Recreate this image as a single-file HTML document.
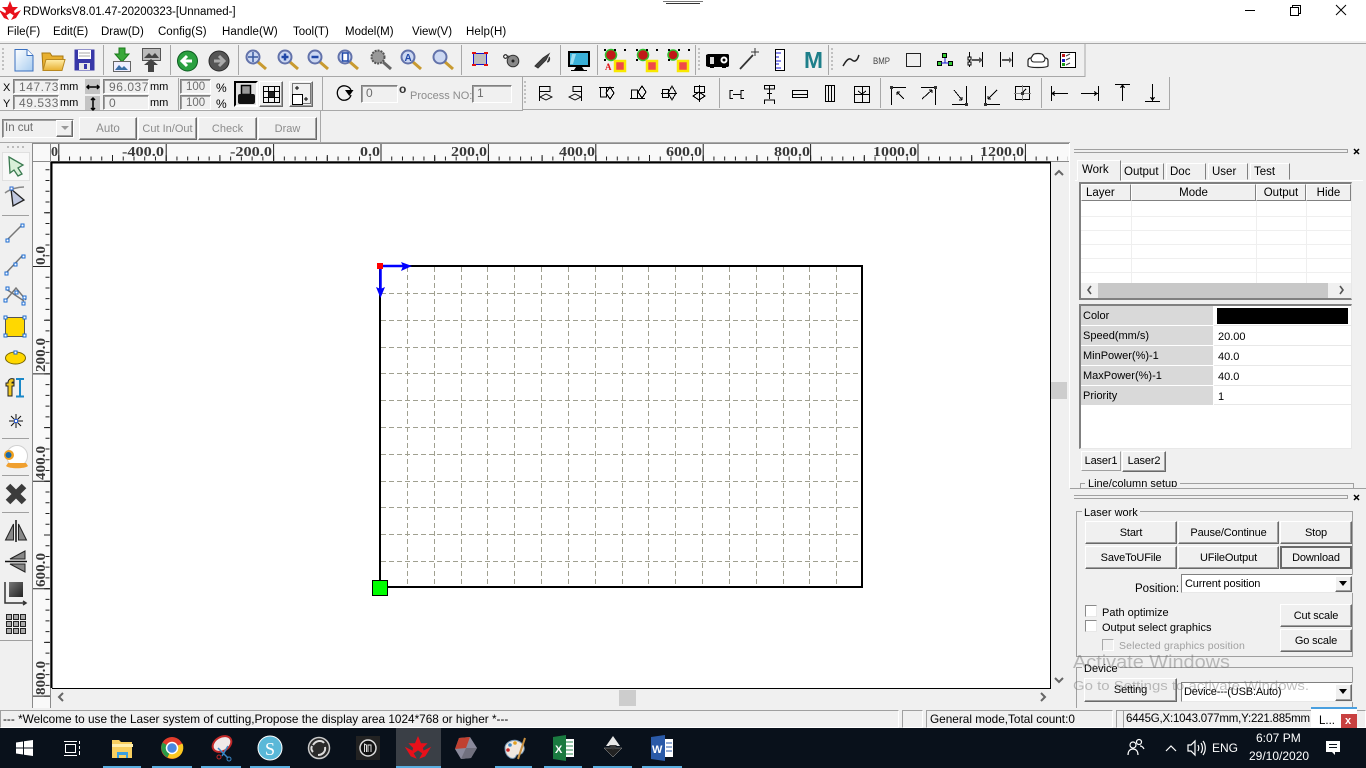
<!DOCTYPE html>
<html><head><meta charset="utf-8"><title>RDWorks</title>
<style>
html,body{margin:0;padding:0;width:1366px;height:768px;overflow:hidden;background:#f0f0f0}
body{position:relative;font:11.5px "Liberation Sans",sans-serif;color:#000}
div{position:absolute;box-sizing:border-box;white-space:nowrap}
.t{line-height:14px}
.b{background:#f0f0f0;border:1px solid;border-color:#fff #696969 #696969 #fff;box-shadow:inset -1px -1px 0 #a0a0a0;text-align:center;font-size:11px;letter-spacing:-.15px}
.d{color:#8c8c8c}
.i{border:1px solid;border-color:#808080 #fff #fff #808080;box-shadow:inset 1px 1px 0 #a0a0a0;color:#6d6d6d;padding-left:5px;background:#f0f0f0;line-height:14px;font-size:12px}
.s{background:#f0f0f0;border:1px solid;border-color:#a0a0a0 #fff #fff #a0a0a0;line-height:16px;padding-left:2px;font-size:11.8px;overflow:hidden}
.h{background:#f0f0f0;border:1px solid;border-color:#fff #808080 #808080 #fff;text-align:center;line-height:16px}
.tab{background:#f0f0f0;border:1px solid;border-color:#fff #808080 transparent #fff;line-height:17px;padding-left:3px;font-size:11.5px}
.c{background:#fff;border:1px solid;border-color:#8a8a8a #e8e8e8 #e8e8e8 #8a8a8a}
.cb{font-size:11px;letter-spacing:-.15px}
.l{left:1081px;width:132px;height:19px;background:#d9d9d9;padding-left:2px;line-height:20px;font-size:11px}
</style></head>
<body>
<!-- title + menu -->
<div style="left:0;top:0;width:1366px;height:41px;background:#fff"></div>
<div class="t" style="left:23px;top:5px;font-size:11.5px;letter-spacing:-.04px">RDWorksV8.01.47-20200323-[Unnamed-]</div>
<div class="t" style="left:7px;top:25px">File(F)</div>
<div class="t" style="left:53px;top:25px">Edit(E)</div>
<div class="t" style="left:101px;top:25px">Draw(D)</div>
<div class="t" style="left:158px;top:25px">Config(S)</div>
<div class="t" style="left:222px;top:25px;letter-spacing:.1px">Handle(W)</div>
<div class="t" style="left:293px;top:25px">Tool(T)</div>
<div class="t" style="left:345px;top:25px">Model(M)</div>
<div class="t" style="left:412px;top:25px">View(V)</div>
<div class="t" style="left:466px;top:25px;letter-spacing:.1px">Help(H)</div>
<!-- row 2 widgets -->
<div class="t" style="left:3px;top:81px;font-size:11px">X</div>
<div class="t" style="left:3px;top:97px;font-size:11px">Y</div>
<div class="i" style="left:13px;top:79px;width:46px;height:15px;overflow:hidden;letter-spacing:.55px;line-height:15px">147.736</div>
<div class="i" style="left:13px;top:95px;width:46px;height:15px;letter-spacing:.55px;line-height:15px">49.533</div>
<div class="t" style="left:60px;top:80px;font-size:11px">mm</div>
<div class="t" style="left:60px;top:96px;font-size:11px">mm</div>
<div style="left:85px;top:79px;width:15px;height:15px;background:#c4c4c4"></div>
<div style="left:85px;top:96px;width:15px;height:15px;background:#c4c4c4"></div>
<div class="i" style="left:103px;top:79px;width:46px;height:15px;letter-spacing:.55px;line-height:15px">96.037</div>
<div class="i" style="left:103px;top:95px;width:46px;height:15px;line-height:15px">0</div>
<div class="t" style="left:150px;top:80px;font-size:11px">mm</div>
<div class="t" style="left:150px;top:96px;font-size:11px">mm</div>
<div class="i" style="left:180px;top:79px;width:31px;height:15px;line-height:15px;padding-left:5px;font-size:11.5px">100</div>
<div class="i" style="left:180px;top:95px;width:31px;height:15px;line-height:15px;padding-left:5px;font-size:11.5px">100</div>
<div class="t" style="left:216px;top:81px;font-size:12px">%</div>
<div class="t" style="left:216px;top:97px;font-size:12px">%</div>
<div style="left:234px;top:81px;width:24px;height:26px;border:2px solid;border-color:#000 #fff #fff #000;background:#e0e0e0"></div>
<div class="b" style="left:259px;top:81px;width:24px;height:26px"></div>
<div class="b" style="left:289px;top:81px;width:24px;height:26px"></div>
<div class="i" style="left:361px;top:85px;width:37px;height:18px;padding-left:4px;line-height:15px">0</div>
<div class="t" style="left:399px;top:82px;font-size:12px;font-weight:bold;color:#333">o</div>
<div class="t d" style="left:410px;top:89px;font-size:11px">Process NO:</div>
<div class="i" style="left:472px;top:85px;width:40px;height:18px;padding-left:4px;line-height:15px">1</div>
<!-- row 3 -->
<div class="i" style="left:2px;top:119px;width:72px;height:19px;padding-left:2px;line-height:17px;font-size:11.5px;color:#6d6d6d">In cut</div>
<div class="b" style="left:56px;top:120px;width:17px;height:17px"></div>
<div class="b d" style="left:79px;top:117px;width:58px;height:23px;line-height:22px;font-size:11.5px;letter-spacing:0">Auto</div>
<div class="b d" style="left:138px;top:117px;width:59px;height:23px;line-height:22px;font-size:11px;letter-spacing:0">Cut In/Out</div>
<div class="b d" style="left:198px;top:117px;width:59px;height:23px;line-height:22px;font-size:11px;letter-spacing:0">Check</div>
<div class="b d" style="left:258px;top:117px;width:59px;height:23px;line-height:22px;font-size:11px;letter-spacing:0">Draw</div>
<!-- rulers -->
<div style="left:33px;top:144px;width:1036px;height:18px;background:#f9f9f9"></div>
<div style="left:33px;top:162px;width:18px;height:546px;background:#f9f9f9"></div>
<!-- canvas -->
<div style="left:52px;top:163px;width:998px;height:525px;background:#fff"></div>
<div style="left:1051px;top:382px;width:16px;height:17px;background:#cdcdcd"></div>
<div style="left:619px;top:690px;width:17px;height:16px;background:#cdcdcd"></div>
<!-- right panel top -->
<div style="left:1077px;top:160px;width:44px;height:21px;background:#f0f0f0;border:1px solid;border-color:#fff #808080 transparent #fff;z-index:2;padding-left:4px;line-height:19px;font-size:11.5px">Work</div>
<div class="tab" style="left:1121px;top:163px;width:43px;height:17px;line-height:16px;padding-left:2px">Output</div>
<div class="tab" style="left:1166px;top:163px;width:40px;height:17px;line-height:16px">Doc</div>
<div class="tab" style="left:1208px;top:163px;width:40px;height:17px;line-height:16px">User</div>
<div class="tab" style="left:1250px;top:163px;width:40px;height:17px;line-height:16px">Test</div>
<div style="left:1075px;top:180px;width:288px;height:1px;background:#fff"></div>
<div class="c" style="left:1079px;top:182px;width:273px;height:118px;border-width:2px 1px 2px 2px;border-color:#808080 #e8e8e8 #808080 #808080"></div>
<div class="h" style="left:1081px;top:184px;width:50px;height:17px;text-align:left;padding-left:4px">Layer</div>
<div class="h" style="left:1131px;top:184px;width:125px;height:17px">Mode</div>
<div class="h" style="left:1256px;top:184px;width:50px;height:17px">Output</div>
<div class="h" style="left:1306px;top:184px;width:45px;height:17px">Hide</div>
<div style="left:1081px;top:283px;width:270px;height:15px;background:#f0f0f0"></div>
<div style="left:1098px;top:283px;width:230px;height:15px;background:#c8c8c8"></div>
<div class="c" style="left:1079px;top:304px;width:273px;height:145px;border-width:2px 1px 1px 2px;border-color:#808080 #e8e8e8 #e8e8e8 #808080"></div>
<div class="l" style="top:306px">Color</div>
<div class="l" style="top:326px">Speed(mm/s)</div>
<div class="l" style="top:346px">MinPower(%)-1</div>
<div class="l" style="top:366px">MaxPower(%)-1</div>
<div class="l" style="top:386px">Priority</div>
<div style="left:1217px;top:308px;width:131px;height:16px;background:#000"></div>
<div class="t" style="left:1218px;top:330px;font-size:11px">20.00</div>
<div class="t" style="left:1218px;top:350px;font-size:11px">40.0</div>
<div class="t" style="left:1218px;top:370px;font-size:11px">40.0</div>
<div class="t" style="left:1218px;top:390px;font-size:11px">1</div>
<div class="b" style="left:1081px;top:451px;width:40px;height:20px;line-height:19px;box-shadow:none;border-right-color:#a0a0a0;border-bottom-color:#a0a0a0">Laser1</div>
<div class="b" style="left:1122px;top:451px;width:44px;height:21px;line-height:19px">Laser2</div>
<div style="left:1080px;top:483px;width:274px;height:6px;border:1px solid #a0a0a0;border-bottom:0"></div>
<div style="left:1085px;top:477px;height:10px;overflow:hidden;background:#f0f0f0;padding:0 3px;font-size:11px;line-height:14px">Line/column setup</div>
<div style="left:1070px;top:488px;width:296px;height:222px;background:#f0f0f0;border-top:1px solid #a0a0a0"></div>
<!-- lower panel -->
<div style="left:1076px;top:511px;width:277px;height:146px;border:1px solid #a0a0a0"></div>
<div class="t" style="left:1082px;top:506px;background:#f0f0f0;padding:0 2px;font-size:11px">Laser work</div>
<div class="b" style="left:1085px;top:521px;width:92px;height:23px;line-height:22px">Start</div>
<div class="b" style="left:1178px;top:521px;width:101px;height:23px;line-height:22px">Pause/Continue</div>
<div class="b" style="left:1280px;top:521px;width:72px;height:23px;line-height:22px">Stop</div>
<div class="b" style="left:1085px;top:546px;width:92px;height:23px;line-height:22px">SaveToUFile</div>
<div class="b" style="left:1178px;top:546px;width:101px;height:23px;line-height:22px">UFileOutput</div>
<div class="b" style="left:1280px;top:546px;width:72px;height:23px;line-height:20px;border:2px solid;border-color:#696969;box-shadow:none">Download</div>
<div class="t" style="left:1135px;top:582px;font-size:11.5px">Position:</div>
<div class="c cb" style="left:1181px;top:574px;width:172px;height:19px;border-color:#808080 #e8e8e8 #e8e8e8 #808080;padding-left:3px;line-height:19px">Current position</div>
<div class="b" style="left:1335px;top:576px;width:17px;height:16px"></div>
<div class="c" style="left:1085px;top:605px;width:12px;height:12px"></div>
<div class="t" style="left:1102px;top:606px;font-size:11px">Path optimize</div>
<div class="c" style="left:1085px;top:620px;width:12px;height:12px"></div>
<div class="t" style="left:1102px;top:621px;font-size:11px">Output select graphics</div>
<div class="c" style="left:1102px;top:639px;width:12px;height:12px;background:#f0f0f0;border-color:#a8a8a8 #fff #fff #a8a8a8"></div>
<div class="t d" style="left:1119px;top:639px;font-size:10.5px;letter-spacing:.13px;color:#a0a0a0">Selected graphics position</div>
<div class="b" style="left:1280px;top:604px;width:72px;height:23px;line-height:22px">Cut scale</div>
<div class="b" style="left:1280px;top:629px;width:72px;height:23px;line-height:22px">Go scale</div>
<div style="left:1076px;top:667px;width:277px;height:43px;border:1px solid #a0a0a0;border-bottom:0"></div>
<div class="t" style="left:1082px;top:662px;background:#f0f0f0;padding:0 2px;font-size:11px">Device</div>
<div class="b" style="left:1084px;top:678px;width:93px;height:24px;line-height:23px">Setting</div>
<div class="c cb" style="left:1181px;top:682px;width:172px;height:20px;border-color:#808080 #e8e8e8 #e8e8e8 #808080;padding-left:2px;line-height:19px">Device---(USB:Auto)</div>
<div class="b" style="left:1335px;top:684px;width:17px;height:17px"></div>
<!-- status bar -->
<div style="left:0;top:708px;width:1366px;height:20px;background:#f0f0f0"></div>
<div class="s" style="left:0;top:710px;width:899px;height:18px">--- *Welcome to use the Laser system of cutting,Propose the display area 1024*768 or higher *---</div>
<div class="s" style="left:902px;top:710px;width:21px;height:18px"></div>
<div class="s" style="left:926px;top:710px;width:187px;height:18px;padding-left:3px">General mode,Total count:0</div>
<div class="s" style="left:1116px;top:710px;width:8px;height:18px"></div>
<div class="s" style="left:1123px;top:710px;width:243px;height:18px;letter-spacing:-.2px;font-size:11.5px">6445G,X:1043.077mm,Y:221.885mm</div>
<div style="left:1311px;top:707px;width:46px;height:21px;background:#fff;border-top:2px solid #4aa0e0"></div>
<div class="t" style="left:1319px;top:714px;font-size:11.5px">L...</div>
<div style="left:1341px;top:714px;width:16px;height:14px;background:#c84040"></div>
<div class="t" style="left:1345px;top:714px;font-size:11px;color:#fff;font-weight:bold">x</div>
<!-- taskbar -->
<div style="left:0;top:728px;width:1366px;height:40px;background:#09111b"></div>
<div style="left:396px;top:728px;width:45px;height:40px;background:#3a3f46"></div>
<div class="t" style="left:1212px;top:741px;font-size:12px;color:#fff">ENG</div>
<div class="t" style="left:1256px;top:731px;font-size:12px;color:#fff">6:07 PM</div>
<div class="t" style="left:1249px;top:749px;font-size:12px;color:#fff">29/10/2020</div>

<svg width="1366" height="768" style="position:absolute;left:0;top:0" xmlns="http://www.w3.org/2000/svg" font-family="Liberation Sans, sans-serif">
<defs>
<linearGradient id="pg" x1="0" y1="0" x2="1" y2="1"><stop offset="0" stop-color="#fff"/><stop offset="1" stop-color="#a8ccf0"/></linearGradient>
<linearGradient id="fo" x1="0" y1="0" x2="0" y2="1"><stop offset="0" stop-color="#ffeeaa"/><stop offset="1" stop-color="#e8b030"/></linearGradient>
<linearGradient id="ds" x1="0" y1="0" x2="1" y2="1"><stop offset="0" stop-color="#777"/><stop offset="1" stop-color="#222"/></linearGradient>
<g id="mag"><line x1="2" y1="2" x2="10" y2="9" stroke="#c89a30" stroke-width="3"/><circle cx="-3" cy="-3" r="6.500" fill="#ccd8f2" stroke="#6272aa" stroke-width="2"/></g>
<g id="logo"><polygon points="0,-10 2.500,-4 8,-4 4,0 6,6 0,2 -6,6 -4,0 -8,-4 -2.500,-4" fill="#e8101a"/><polygon points="-11,-1 -5,2 -1,9 -6,7" fill="#e8101a"/><polygon points="11,-1 5,2 1,9 6,7" fill="#e8101a"/></g>
<g id="dots" fill="#000"><rect x="-11" y="-11" width="2" height="2"/><rect x="-1" y="-11" width="2" height="2"/><rect x="9" y="-11" width="2" height="2"/><rect x="-11" y="-1" width="2" height="2"/></g>
</defs>

<!-- title -->
<use href="#logo" transform="translate(10,11)"/>
<path d="M663 1.500h40" stroke="#777" stroke-width="1"/><path d="M666 3.500h34" stroke="#333" stroke-width="1"/>
<path d="M1245 10.500h10" stroke="#000" fill="none"/>
<path d="M1290.500 7.500h8v8h-8zM1292.500 7.500v-2h8v8h-2" stroke="#000" fill="none"/>
<path d="M1336 5l10 10M1346 5l-10 10" stroke="#000" fill="none"/>

<!-- toolbar separators -->
<g stroke="#a8a8a8" fill="none">
<path d="M0 43.500H1366"/><path d="M0 76.500H1085"/><path d="M1085 44v33"/>
<path d="M103.500 45v30M170.500 45v30M238.500 45v30M461.500 45v30M560.500 45v30M597.500 45v30M695.500 45v30M828.500 45v30"/>
<path d="M178.500 78v32M322.500 77v33M0 110.500H322M322 110.500H522M522.500 77v34M522 109.500H1169M1169.500 77v33"/>
<path d="M719.500 78v30M880.500 78v30M1041.500 78v30"/>
<path d="M320.500 111v31M0 142.500H1070"/>
</g>
<g stroke="#c0c0c0" stroke-width="2" stroke-dasharray="2 2"><path d="M3 48v24M699 48v24M832 48v24M525 81v24"/></g>

<!-- row 1 icons -->
<path d="M15 49.500h12l6 6v15.500h-18z" fill="url(#pg)" stroke="#3a70c0"/><path d="M27 49.500v6h6" fill="#fff" stroke="#3a70c0"/>
<path d="M43 70l-1-17h8l2 3h11v4z" fill="#e8b030" stroke="#a87810"/><path d="M43 70.500l3-11h19l-3 11z" fill="url(#fo)" stroke="#b88820"/>
<path d="M74.500 49.500h20v21h-20z" fill="#3838a8"/><rect x="78" y="50" width="13" height="9" fill="#fff"/><path d="M79 53h11M79 56h11" stroke="#aaa"/><rect x="79" y="63" width="11" height="7" fill="#e8e8e8"/><rect x="84" y="64" width="3" height="5" fill="#3838a8"/>
<path d="M119 48h6v6h4l-7 8-7-8h4z" fill="#3aa83a" stroke="#1a7a1a"/><rect x="113.500" y="61.500" width="17" height="10" fill="#eef" stroke="#666"/><path d="M115 70l4-5 3 3 2-2 4 4z" fill="#3a6ea8"/>
<rect x="142.500" y="48.500" width="18" height="12" fill="#bbb" stroke="#555"/><path d="M144 58l5-5 3 3 3-3 4 5z" fill="#444"/><path d="M151 59l7 6h-4v7h-6v-7h-4z" fill="#444"/>
<circle cx="187.500" cy="61" r="10" fill="#2aa040" stroke="#0c5a20"/><path d="M192 61h-8M187 56l-5 5 5 5" stroke="#fff" stroke-width="3" fill="none"/>
<circle cx="219" cy="61" r="10" fill="#555" stroke="#2a2a2a"/><path d="M214 61h8M219 56l5 5-5 5" stroke="#aaa" stroke-width="3" fill="none"/>
<use href="#mag" transform="translate(256,60)"/><path d="M253 52v10M248 57h10" stroke="#3858a0" stroke-width="1.500"/>
<use href="#mag" transform="translate(288,60)"/><path d="M285 53.500v7M281.500 57h7" stroke="#2048a8" stroke-width="2.500"/>
<use href="#mag" transform="translate(318,60)"/><path d="M311.500 57h7" stroke="#2048a8" stroke-width="2.500"/>
<use href="#mag" transform="translate(348,60)"/><rect x="342.500" y="53" width="5.500" height="8" fill="#fff" stroke="#2048a8" stroke-width="1.500"/>
<g transform="translate(381,60)"><line x1="2" y1="2" x2="10" y2="9" stroke="#666" stroke-width="3"/><circle cx="-3" cy="-3" r="6.500" fill="#999" stroke="#555" stroke-width="2" stroke-dasharray="2 1"/></g>
<use href="#mag" transform="translate(411,60)"/><text x="404.500" y="61" font-size="10" font-weight="bold" fill="#2048a8">A</text>
<use href="#mag" transform="translate(443,60)"/>
<rect x="473.500" y="53.500" width="13" height="11" fill="#bdbdbd" stroke="#1010d0"/><path d="M472 53h4M484 53h4M472 65h4M484 65h4" stroke="#e01010" stroke-width="2"/>
<circle cx="505.500" cy="56.500" r="1.800" fill="#fff" stroke="#000"/><path d="M507 56l7 1" stroke="#333"/><circle cx="513" cy="61" r="5.800" fill="#888" stroke="#333"/><circle cx="513" cy="61" r="1.500" fill="#222"/>
<path d="M535 66l8-8 6-4-3 6-8 8zM547 62c3 0 3-4 2-5" fill="#444" stroke="#333"/>
<rect x="568" y="51" width="22" height="16" fill="#000"/><rect x="570" y="53" width="18" height="12" fill="#3ab0d8"/><path d="M572 54l4 0-3 10h-3z" fill="#9adcf0"/><path d="M576 67h6l2 3h3v1h-16v-1h3z" fill="#000"/>
<g transform="translate(615,60)"><circle cx="-4" cy="-5" r="5.500" fill="#c01818" stroke="#30c030" stroke-width="1.500"/><rect x="0" y="1" width="10" height="10" fill="#f04848" stroke="#f8e800" stroke-width="2.500"/><use href="#dots"/><text x="-10" y="10" font-size="9" font-weight="bold" fill="#e01010" font-family="Liberation Serif">A</text></g>
<g transform="translate(647,60)"><circle cx="-4" cy="-5" r="5.500" fill="#c01818" stroke="#30c030" stroke-width="1.500"/><rect x="0" y="1" width="10" height="10" fill="#f04848" stroke="#f8e800" stroke-width="2.500"/><use href="#dots"/></g>
<g transform="translate(679,60)"><circle cx="-6" cy="-5" r="5" fill="#c01818" stroke="#30c030" stroke-width="1.500"/><rect x="-1" y="1" width="10" height="10" fill="#f04848" stroke="#f8e800" stroke-width="2.500"/><use href="#dots"/></g>
<path d="M708 54h20l1 1v11l-1 1h-20l-2-1v-11z" fill="#000"/><rect x="710" y="57" width="4" height="7" fill="#ddd"/><circle cx="724" cy="60" r="3.500" fill="#fff"/><circle cx="724" cy="60" r="1.500" fill="#000"/><path d="M710 67h4M722 67h4" stroke="#000" stroke-width="2"/>
<path d="M740 69l13-14" stroke="#333" stroke-width="1.800"/><path d="M755 48v8M751 52h8" stroke="#333"/>
<rect x="775.500" y="49.500" width="9" height="21" fill="#fff" stroke="#000"/><path d="M776 53h5M776 57h3M776 61h5M776 64h3M776 68h5" stroke="#1818d8"/>
<text x="804" y="68" font-size="23" font-weight="bold" fill="#1e7f8a" textLength="19" lengthAdjust="spacingAndGlyphs">M</text>
<path d="M843 66c2-3 3-6 6-7 3-1 3 3 6 2 3-1 3-4 4-6" stroke="#222" stroke-width="1.500" fill="none"/>
<text x="873" y="64" font-size="9.500" fill="#444" textLength="17" lengthAdjust="spacingAndGlyphs">BMP</text>
<rect x="906.500" y="53.500" width="14" height="13" fill="none" stroke="#222"/>
<g fill="#3c3" stroke="#000"><rect x="942.500" y="53.500" width="4" height="4"/><rect x="937.500" y="61.500" width="4" height="4"/><rect x="948.500" y="61.500" width="4" height="4"/></g><path d="M945 58v5M941 63h8" stroke="#1818d8"/>
<path d="M969.500 52v15M982.500 52v15" stroke="#000"/><rect x="968" y="57" width="3" height="3" fill="#fff" stroke="#000"/><rect x="968" y="62" width="3" height="3" fill="#fff" stroke="#000"/><path d="M972 59h7v-2l4 3-4 3v-2h-7z" fill="#555"/>
<path d="M1000.500 52v15M1012.500 52v15" stroke="#000"/><path d="M1002 59h7v-2l3 3-3 3v-2h-7z" fill="#555"/>
<path d="M1028 66v-5c0-2 1-3 3-3l2-3c1-2 9-2 10 0l2 3c2 0 3 1 3 3v5c-2 2-18 2-20 0z" fill="#fff" stroke="#222" stroke-width="1.200"/><path d="M1031 58c0 3 1 4 3 4h8c2 0 3-1 3-4" fill="none" stroke="#222"/>
<rect x="1060.500" y="52.500" width="15" height="15" fill="#fff" stroke="#000"/><rect x="1062" y="54" width="3" height="3" fill="#c01818"/><rect x="1062" y="59" width="3" height="3" fill="#1818c0"/><rect x="1062" y="63" width="3" height="3" fill="#18a018"/><path d="M1066 56l4-2M1066 60l4-2M1066 65l4-2" stroke="#444"/>

<!-- row 2 icons -->
<path d="M87 87h12M89 85l-2 2 2 2M97 85l2 2-2 2" stroke="#000" stroke-width="1.500" fill="none"/>
<path d="M93 98v12M91 100l2-2 2 2M91 108l2 2 2-2" stroke="#000" stroke-width="1.500" fill="none"/>
<rect x="241.500" y="85.500" width="9" height="9" fill="#999" stroke="#000" stroke-width="1.500"/><rect x="238" y="94" width="17" height="10" rx="2" fill="#111"/>
<g stroke="#000" fill="none" shape-rendering="crispEdges"><path d="M263.500 86.500h16v16h-16zM263.500 91.500h16M263.500 97.500h16M268.500 86.500v16M274.500 86.500v16"/></g><rect x="269" y="92" width="5" height="5" fill="#222"/>
<rect x="292.500" y="83.500" width="18" height="20" fill="none" stroke="#000" stroke-dasharray="1 1"/><rect x="292.500" y="94.500" width="10" height="10" fill="#fff" stroke="#000"/><path d="M295 88h4M297 86v4M304 99h4M306 97v4" stroke="#000"/>
<path d="M351 90c-2-4-8-6-12-2-3 4-2 10 3 12 4 1 8-1 9-5" fill="none" stroke="#000" stroke-width="1.300"/><path d="M345 90h8.500l-4.200 6z" fill="#000"/>
<g stroke="#000" fill="none" shape-rendering="crispEdges">
<path d="M539.500 86v15M540 86.500h10v5h-10M540 97l6-3 6 3-6 3z"/>
<path d="M581.500 86v15M581 86.500h-8v5h8M581 97l-6-3-6 3 6 3z"/>
<path d="M599 87.500h15M600.500 88v9h6v-9M610 87l4 6-4 6-4-6z"/>
<path d="M630 98.500h15M631.500 98v-8h6v8M642 86l-4 6 4 6 4-6z"/>
<path d="M661 93.500h16M662.500 89.500h6v8h-6zM672 86l-4 7 4 7 4-7z"/>
<path d="M699.500 85v17M694.500 86.500h10v6h-10zM699 92l-6 4 6 4 6-4z"/>
<path d="M733 90.500h-3v8h3M744 90.500h-3v8h3M733 94.500h8"/>
<path d="M764 85.500h10M769.500 86v13M767 93.500h5M764.500 85v4h10v-4M764.500 104v-4h10v4"/>
<path d="M792.500 90.500h15v7h-15zM793 94.500h14"/>
<path d="M825.500 85.500h9v16h-9zM828.500 86v15M831.500 86v15"/>
<path d="M854.500 86.500h15v16h-15zM855 94.500h14M862.500 87v15M858 91l4 3 4-3"/>
<path d="M891.500 87v18M891 87.500h15M897 92l7 7M897 92h3M897 92v3"/>
<path d="M935.500 87v18M921 87.500h15M922 99l10-9M932 90h-3M932 90v3"/>
<path d="M966.500 86v18M952 104.500h15M954 90l8 10M962 100h-3M962 100v-3"/>
<path d="M985.500 86v18M985 104.500h15M997 90l-9 9M988 99h3M988 99v-3"/>
<path d="M1015.500 86.500h14v13h-14zM1022 93l4-4"/>
<path d="M1051.500 86v15M1052 93.500h16M1052 93.500l3-2M1052 93.500l3 2"/>
<path d="M1098.500 86v15M1081 93.500h17M1097 93.500l-3-2M1097 93.500l-3 2"/>
<path d="M1115 84.500h15M1122.500 85v16M1122.500 85l-2 3M1122.500 85l2 3"/>
<path d="M1145 101.500h15M1152.500 84v17M1152.500 100l-2-3M1152.500 100l2-3"/>
</g>
<path d="M1014 93.500h17M1022.500 85v16" stroke="#888" fill="none"/>
<g fill="#333"><rect x="890" y="86" width="3" height="3"/><rect x="934" y="86" width="3" height="3"/><rect x="965" y="103" width="3" height="3"/><rect x="984" y="103" width="3" height="3"/><rect x="1021" y="92" width="3" height="3"/></g>
<path d="M61 126l4 4 4-4z" fill="#999"/>

<!-- left toolbar -->
<path d="M32.500 143v565M50.500 143v565M33 143.500h1036" stroke="#8a8a8a" fill="none"/>
<path d="M33 161.500h1036" stroke="#8a8a8a"/>
<path d="M7 147h20" stroke="#bbb" stroke-width="2" stroke-dasharray="2 3"/>
<rect x="2.500" y="152.500" width="27" height="28" fill="#f8f8f8" stroke="#ccc" stroke-dasharray="1 1"/>
<polygon points="9,157 23,165 18,168 22,174 18,176 14,170 10,173" fill="#d8f0d8" stroke="#3a7a50" stroke-width="1.300"/>
<path d="M5 193c5-4 13-6 19-6" stroke="#888" stroke-width="1.500" fill="none"/><polygon points="11,189 24,200 13,206" fill="#c0c8e0" stroke="#222" stroke-width="1.300"/><rect x="10" y="187" width="3" height="3" fill="#fff" stroke="#2a6ad0"/>
<g stroke="#a0a0a0" fill="none"><path d="M2 215.500h27M2 438.500h27M2 475.500h27M2 512.500h27M0 640.500h32"/></g>
<g stroke="#777" stroke-width="1.500" fill="none"><path d="M7 240L22 225M6 273L22 256M6 300l10-12 10 12M6 289l18 12"/></g>
<g fill="#fff" stroke="#1a6ad0" stroke-width="1"><rect x="6" y="239" width="3" height="3"/><rect x="21" y="224" width="3" height="3"/><rect x="5" y="272" width="3" height="3"/><rect x="14" y="263" width="3" height="3"/><rect x="22" y="255" width="3" height="3"/><rect x="4" y="299" width="3" height="3"/><rect x="15" y="291" width="3" height="3"/><rect x="6" y="287" width="3" height="3"/><rect x="23" y="296" width="3" height="3"/><rect x="22" y="302" width="3" height="3"/></g>
<rect x="5.500" y="317.500" width="19" height="19" fill="#ffd800" stroke="#555"/><g fill="#fff" stroke="#1a6ad0"><rect x="4" y="316" width="3" height="3"/><rect x="23" y="316" width="3" height="3"/><rect x="4" y="334" width="3" height="3"/><rect x="23" y="334" width="3" height="3"/></g>
<ellipse cx="15.500" cy="358" rx="10" ry="6" fill="#ffd800" stroke="#776600"/><rect x="14" y="351" width="3" height="3" fill="#fff" stroke="#1a6ad0"/>
<path d="M8 396v-10h-2v-3h2c0-4 3-5 6-4v3c-2 0-2 0-2 1h2v3h-2v10z" fill="#f0c820" stroke="#222"/>
<path d="M16 379h8M16 396.500h8M20 379v17" stroke="#1a88c8" stroke-width="2" fill="none"/>
<path d="M16 414v14M9 421h14M11 416l10 10M21 416l-10 10" stroke="#111"/><rect x="14.500" y="419.500" width="3" height="3" fill="#fff" stroke="#3060d0"/>
<circle cx="17" cy="456" r="10.500" fill="#fff" stroke="#d0d0d0"/><path d="M6 466c3 3 19 3 22 0l-2-3H8z" fill="#f0a030"/><circle cx="9" cy="455" r="5" fill="#f0a020"/><circle cx="8.500" cy="455" r="3" fill="#1a6aa8"/>
<path d="M8 486l16 16M24 486L8 502" stroke="#3c3c3c" stroke-width="6.500"/>
<path d="M16 520v22" stroke="#111" stroke-width="1.500"/><polygon points="5.500,540 13.500,540 13.500,524" fill="#888" stroke="#222"/><polygon points="18.500,524 18.500,540 26.500,540" fill="#888" stroke="#222"/>
<path d="M5 561.500h22" stroke="#111" stroke-width="1.500"/><polygon points="25,551 25,559 10,559" fill="#888" stroke="#222"/><polygon points="10,564 25,564 25,572" fill="#888" stroke="#222"/>
<rect x="9" y="582" width="14" height="15" fill="url(#ds)"/><path d="M5 582v21h20M23 601l3 2-3 2" stroke="#333" stroke-width="1.500" fill="none"/>
<g fill="#aaa" stroke="#222"><rect x="6.500" y="614.500" width="5" height="5"/><rect x="13.500" y="614.500" width="5" height="5"/><rect x="20.500" y="614.500" width="5" height="5"/><rect x="6.500" y="621.500" width="5" height="5"/><rect x="13.500" y="621.500" width="5" height="5"/><rect x="20.500" y="621.500" width="5" height="5"/><rect x="6.500" y="628.500" width="5" height="5"/><rect x="13.500" y="628.500" width="5" height="5"/><rect x="20.500" y="628.500" width="5" height="5"/></g>

<!-- rulers -->
<g stroke="#222" fill="none">
<line x1="58.300" y1="158.500" x2="1068" y2="158.500" stroke-width="4" stroke-dasharray="1 9.740"/>
<line x1="58.300" y1="158" x2="1068" y2="158" stroke-width="6" stroke-dasharray="1 52.700"/>
<line x1="58.300" y1="152.500" x2="1068" y2="152.500" stroke-width="17" stroke-dasharray="1 106.400"/>
<line x1="47.500" y1="169.300" x2="47.500" y2="706" stroke-width="4" stroke-dasharray="1 9.740"/>
<line x1="47" y1="212.300" x2="47" y2="706" stroke-width="6" stroke-dasharray="1 52.700"/>
<line x1="41.500" y1="266" x2="41.500" y2="706" stroke-width="17" stroke-dasharray="1 106.400"/>
</g>
<g font-family="Liberation Serif, serif" font-weight="bold" font-size="14" fill="#3a3a3a" text-anchor="end">
<text x="58" y="156">0</text>
<text x="164" y="156" textLength="42" lengthAdjust="spacingAndGlyphs">-400.0</text>
<text x="272" y="156" textLength="42" lengthAdjust="spacingAndGlyphs">-200.0</text>
<text x="380" y="156" textLength="20" lengthAdjust="spacingAndGlyphs">0.0</text>
<text x="487" y="156" textLength="36" lengthAdjust="spacingAndGlyphs">200.0</text>
<text x="595" y="156" textLength="36" lengthAdjust="spacingAndGlyphs">400.0</text>
<text x="702" y="156" textLength="36" lengthAdjust="spacingAndGlyphs">600.0</text>
<text x="810" y="156" textLength="36" lengthAdjust="spacingAndGlyphs">800.0</text>
<text x="917" y="156" textLength="44" lengthAdjust="spacingAndGlyphs">1000.0</text>
<text x="1024" y="156" textLength="44" lengthAdjust="spacingAndGlyphs">1200.0</text>
</g>
<g font-family="Liberation Serif, serif" font-weight="bold" font-size="14" fill="#3a3a3a">
<text transform="translate(45,265) rotate(-90)" textLength="19" lengthAdjust="spacingAndGlyphs">0.0</text>
<text transform="translate(45,372) rotate(-90)" textLength="34" lengthAdjust="spacingAndGlyphs">200.0</text>
<text transform="translate(45,480) rotate(-90)" textLength="34" lengthAdjust="spacingAndGlyphs">400.0</text>
<text transform="translate(45,587) rotate(-90)" textLength="34" lengthAdjust="spacingAndGlyphs">600.0</text>
<text transform="translate(45,695) rotate(-90)" textLength="34" lengthAdjust="spacingAndGlyphs">800.0</text>
</g>

<!-- canvas border -->
<path d="M51.500 162v526M51 162.500H1051" stroke="#000" stroke-width="2" fill="none"/>
<path d="M52 688.500H1051M1050.500 163v526" stroke="#000" fill="none"/>
<g fill="none" stroke="#666" stroke-width="2"><path d="M1055 175l4-4 4 4M1055 678l4 4 4-4M63 693l-4 4 4 4M1041 693l4 4-4 4"/></g>

<!-- grid -->
<g stroke="#a0a090" stroke-dasharray="5 3" fill="none">
<path d="M407.500 267V586M434.500 267V586M461.500 267V586M487.500 267V586M514.500 267V586M541.500 267V586M568.500 267V586M595.500 267V586M622.500 267V586M648.500 267V586M675.500 267V586M702.500 267V586M729.500 267V586M756.500 267V586M783.500 267V586M809.500 267V586M836.500 267V586"/>
<path d="M381 293.500H861M381 320.500H861M381 347.500H861M381 373.500H861M381 400.500H861M381 427.500H861M381 454.500H861M381 481.500H861M381 507.500H861M381 534.500H861M381 561.500H861"/>
</g>
<rect x="380" y="266" width="482" height="321" fill="none" stroke="#000" stroke-width="2"/>
<path d="M380 266H405M380.500 266V292" stroke="#0000ff" stroke-width="2.500" fill="none"/>
<polygon points="401,262 412,266 401,271 403,266" fill="#0000ff"/><polygon points="376,287 380.500,298 385,287 380.500,289" fill="#0000ff"/>
<rect x="377" y="263" width="6" height="6" fill="#ff0000"/>
<rect x="372.500" y="580.500" width="15" height="15" fill="#00ff00" stroke="#000"/>

<!-- right panel -->
<path d="M1069.500 143v345" stroke="#fff"/>
<path d="M1074 149.500h273M1074 152.500h273M1347.500 149v4" stroke="#a0a0a0" fill="none"/>
<path d="M1354 149l5 5M1359 149l-5 5" stroke="#000" stroke-width="1.500"/>
<path d="M1074 495.500h273M1074 498.500h273M1347.500 495v4" stroke="#a0a0a0" fill="none"/>
<path d="M1354 495l5 5M1359 495l-5 5" stroke="#000" stroke-width="1.500"/>
<g stroke="#efefef" fill="none"><path d="M1081 216.500h270M1081 230.500h270M1081 244.500h270M1081 258.500h270M1081 272.500h270M1131.500 201v82M1256.500 201v82M1306.500 201v82"/></g>
<g stroke="#e8e8e8" fill="none"><path d="M1214 325.500h137M1214 345.500h137M1214 365.500h137M1214 385.500h137M1214 404.500h137"/></g>
<g fill="none" stroke="#555" stroke-width="1.600"><path d="M1091 286l-3 4 3 4M1340 286l3 4-3 4"/></g>
<path d="M1339 581h8l-4 5zM1339 689h8l-4 5z" fill="#000"/>

<!-- watermark -->
<text x="1073" y="668" font-size="18" fill="#6a6a6a" fill-opacity=".42" textLength="157" lengthAdjust="spacingAndGlyphs">Activate Windows</text>
<text x="1073" y="690" font-size="13" fill="#6a6a6a" fill-opacity=".42" textLength="236" lengthAdjust="spacingAndGlyphs">Go to Settings to activate Windows.</text>

<!-- taskbar icons -->
<path d="M16 742.500l7-1v6h-7zM24 741.300l9-1.300v7.500h-9zM16 748.500h7v6l-7-1zM24 748.500h9v7.500l-9-1.300z" fill="#fff"/>
<g stroke="#fff" fill="none"><rect x="65.500" y="744.500" width="10" height="8"/><path d="M64 741.500h13M64 755.500h13M79.500 741v3M79.500 746v3M79.500 751v4"/></g>
<path d="M112 740h7l2 2h11v16h-20z" fill="#f8d060"/><rect x="112" y="744" width="21" height="3" fill="#fff0b0"/><path d="M117 752h11v6h-2v-3h-7v3h-2z" fill="#3aa0e0"/>
<circle cx="172" cy="748" r="11" fill="#e23c2c"/><path d="M172 748l-9.500-5.500a11 11 0 0 0 5 15z" fill="#2a9a48"/><path d="M172 748l-4.500 9.500a11 11 0 0 0 15-14z" fill="#fbc820"/><circle cx="172" cy="748" r="5.500" fill="#4a88e0" stroke="#fff" stroke-width="1.500"/>
<ellipse cx="222" cy="744" rx="10" ry="7" fill="#f0e8e8" stroke="#c02828" stroke-width="2" transform="rotate(-30 222 744)"/><path d="M218 748l10 10M228 746l-6 10" stroke="#3a88c8" stroke-width="1.500"/><circle cx="219" cy="757" r="2" fill="none" stroke="#c02828"/><circle cx="229" cy="759" r="2" fill="none" stroke="#3a88c8"/>
<circle cx="270" cy="748" r="12" fill="#5ab8d8" stroke="#fff" stroke-width="1"/><text x="270" y="755" font-family="Liberation Serif" font-size="18" fill="#fff" text-anchor="middle">S</text>
<circle cx="319" cy="748" r="10.500" fill="#2a2a2a" stroke="#ccc" stroke-width="1.500"/><path d="M313 745c3-5 9-5 11-2M325 747c1 5-3 8-7 8M313 752c-2-2-2-4-1-6" stroke="#ddd" stroke-width="2" fill="none"/>
<rect x="356" y="736" width="24" height="24" fill="#222"/><circle cx="368" cy="748" r="8" fill="#111" stroke="#ddd" stroke-width="1.500"/><path d="M364.500 752v-8l2 1v7M368 752v-7l3 0v7" stroke="#ddd" fill="none"/>
<use href="#logo" transform="translate(418,748) scale(1.200)"/>
<polygon points="459,738 470,737 477,748 471,758 461,759 455,749" fill="#8a8a9c"/><polygon points="459,738 470,737 466,748 455,749" fill="#c04030"/><polygon points="466,748 477,748 471,758 461,759" fill="#70707e"/>
<path d="M505 748c0-6 8-9 13-7 5 2 8 7 5 11-2 4-6 1-7 4-1 3-5 3-7 1-3-2-4-5-4-9z" fill="#f0e8e0" stroke="#7a9ab8"/><circle cx="510" cy="745" r="1.800" fill="#3a88c8"/><circle cx="515" cy="743" r="1.800" fill="#e0a020"/><circle cx="508" cy="750" r="1.800" fill="#c82828"/><path d="M525 738l-7 21" stroke="#c89040" stroke-width="2"/>
<rect x="559" y="739" width="15" height="18" fill="#fff"/><path d="M566 742h7M566 746h7M566 750h7M566 754h7" stroke="#2a8a50"/><path d="M553 737l13-2v26l-13-2z" fill="#1a7a40"/><text x="555" y="753" font-size="11" font-weight="bold" fill="#fff">X</text>
<polygon points="613,736 620,746 606,746" fill="#e8e8e8"/><polygon points="604,748 622,748 613,757" fill="#222" stroke="#aaa" stroke-width=".5"/><path d="M609 745h8l-4 5z" fill="#3a3a3a"/>
<rect x="665" y="739" width="8" height="18" fill="#fff"/><path d="M666 743h6M666 747h6M666 751h6" stroke="#2a5aa8"/><path d="M651 737l14-2v26l-14-2z" fill="#2a5aa8"/><text x="652" y="753" font-size="11" font-weight="bold" fill="#fff">W</text>
<g fill="#5aaee0"><rect x="103" y="766" width="38" height="2"/><rect x="152" y="766" width="40" height="2"/><rect x="201" y="766" width="40" height="2"/><rect x="250" y="766" width="40" height="2"/><rect x="396" y="766" width="45" height="2"/><rect x="495" y="766" width="37" height="2"/><rect x="544" y="766" width="38" height="2"/><rect x="593" y="766" width="39" height="2"/><rect x="642" y="766" width="40" height="2"/></g>
<!-- tray -->
<g stroke="#fff" fill="none" stroke-width="1.200">
<circle cx="1133" cy="745" r="3"/><path d="M1128 755c0-4 2-6 5-6s5 2 5 6"/><circle cx="1139" cy="742" r="2.500"/><path d="M1140 746c2 0 3 1 4 3"/>
<path d="M1166 751l5-5 5 5"/>
<path d="M1188 745h3l4-4v14l-4-4h-3zM1198 745c1 2 1 4 0 6M1201 743c2 3 2 7 0 10M1203 741c3 4 3 10 0 14"/>
</g>
<path d="M1326 741h14v11h-5v3l-3-3h-6z" fill="#fff"/><path d="M1329 744.500h8M1329 747.500h8" stroke="#09111b"/>
</svg>
</body></html>
